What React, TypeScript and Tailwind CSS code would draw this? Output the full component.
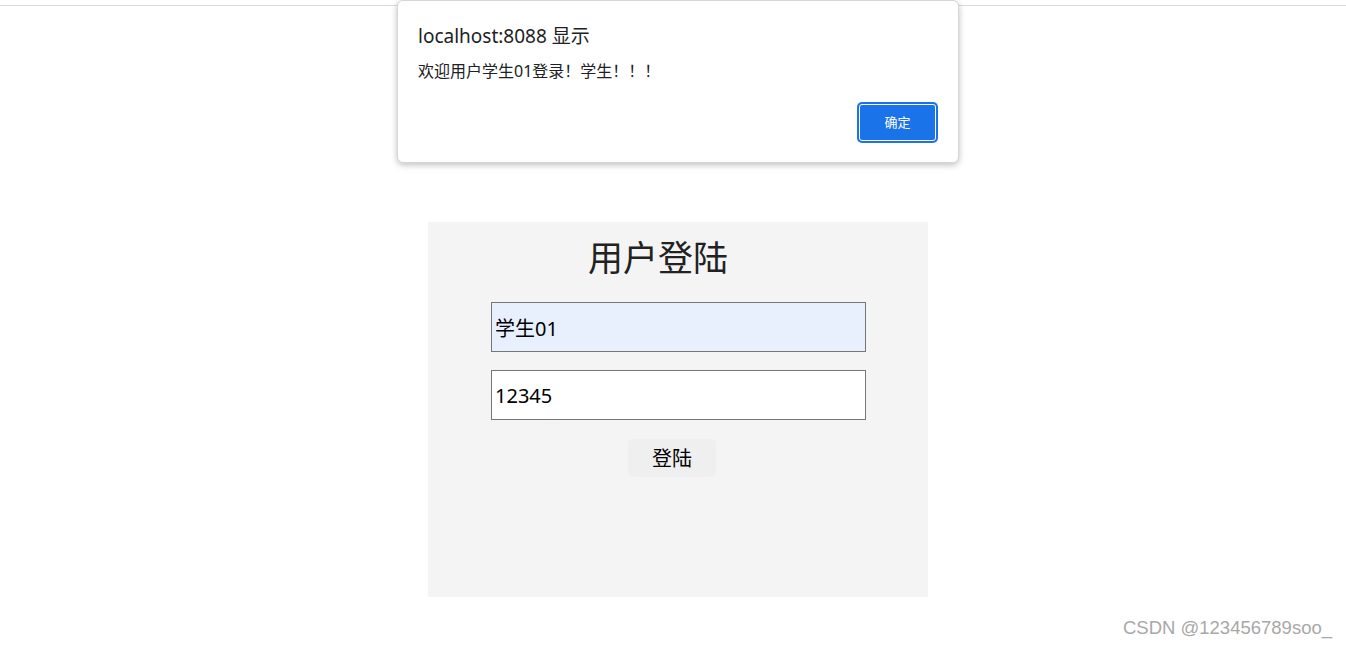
import React from "react";

export default function App() {
  const cjk = { fontFamily: '"Noto Sans", "Noto Sans CJK SC", sans-serif' };
  return (
    <div className="relative w-[1346px] h-[647px] bg-white overflow-hidden" style={cjk}>
      <div className="h-[6px] border-b border-[#dadce0]" />
      <div className="pt-[216px] pl-[428px]">
        <div className="w-[500px] h-[375px] bg-[#f4f4f4] flex flex-col items-center">
          <h1 className="mt-[12px] mr-[40px] text-[35px] leading-[48px] text-[#222]">用户登陆</h1>
          <input
            className="mt-[20px] ml-[1px] w-[375px] h-[50px] bg-[#e8f0fe] border border-[#767676] px-[3px] text-[20px] text-black outline-none"
            defaultValue="学生01"
          />
          <input
            className="mt-[18px] ml-[1px] w-[375px] h-[50px] bg-white border border-[#767676] px-[3px] text-[20px] text-black outline-none"
            defaultValue="12345"
          />
          <button className="mt-[19px] ml-[-12px] w-[88px] h-[38px] pt-[2px] bg-[#efefef] rounded-[5px] text-[20px] text-black">
            登陆
          </button>
        </div>
      </div>

      <div className="absolute left-[397px] top-0 w-[562px] h-[163px] bg-white rounded-[6px] border border-[#d6d6d6] shadow-[0_2px_6px_rgba(0,0,0,0.25)]">
        <div className="pl-[20px] pt-[22px] text-[19px] leading-[26px] text-[#202124]">localhost:8088 显示</div>
        <div className="pl-[20px] pt-[11px] text-[16px] leading-[22px] text-[#202124]">欢迎用户学生01登录！学生！！！</div>
        <div className="absolute right-[20px] top-[101px] w-[81px] h-[41px] rounded-[5px] bg-[#1a73e8] p-[2px]">
          <div className="w-full h-full rounded-[3px] border border-white flex items-center justify-center text-[13px] text-white">
            确定
          </div>
        </div>
      </div>

      <div
        className="absolute right-[14px] top-[616px] text-[18.5px] leading-[24px] text-[#a8a8a8]"
        style={{ fontFamily: '"Liberation Sans", Arial, sans-serif' }}
      >
        CSDN @123456789soo_
      </div>
    </div>
  );
}
